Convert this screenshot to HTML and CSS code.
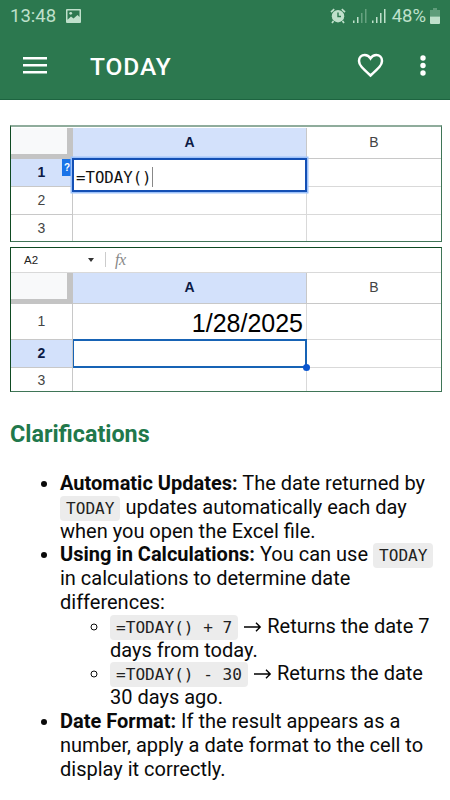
FILE: index.html
```
<!DOCTYPE html>
<html lang="en">
<head>
    <meta charset="UTF-8">
    <meta name="viewport" content="width=device-width, initial-scale=1.0">
    <title>TODAY</title>
    <link rel="stylesheet" href="styles.css">
</head>
<body>
    <header class="top">
        <div class="status-bar">
            <span class="clock">13:48</span>
            <svg class="picture-icon" width="15" height="14" viewBox="0 0 15 14">
                <rect width="15" height="14" rx="1" fill="currentColor"/>
                <path fill="#2c784f" d="M1.500 1.500h12v6.500l-2-2-4 3.500-2.500-2-3.500 3.200z"/>
                <circle cx="4.700" cy="4.300" r="1.400" fill="currentColor"/>
            </svg>
            <div class="status-right">
                <svg width="16" height="16" viewBox="0 0 16 16">
                    <circle cx="8" cy="8.200" r="6.200" fill="currentColor"/>
                    <path d="M1 4.200L4.200 1.200M15 4.200L11.800 1.200M3.500 13l-1.500 2M12.500 13l1.500 2" fill="none" stroke="currentColor" stroke-width="1.700"/>
                    <path d="M8 4.500v4h3" fill="none" stroke="#2c784f" stroke-width="1.400"/>
                </svg>
                <svg class="signal-first" width="14" height="15" viewBox="0 0 14 15" fill="currentColor">
                    <path d="M0 12.500h1.500V15H0zM4 9h1.500v6H4z"/>
                    <path d="M8 5h1.500v10H8zM12 1h1.500v14H12z" opacity=".4"/>
                </svg>
                <svg class="signal-second" width="14" height="15" viewBox="0 0 14 15" fill="currentColor">
                    <path d="M0 12.500h1.500V15H0zM4 9h1.500v6H4zM8 5h1.500v10H8zM12 1h1.500v14H12z"/>
                </svg>
                <span class="battery-text">48%</span>
                <svg width="10" height="16" viewBox="0 0 10 16" fill="currentColor">
                    <path d="M3 0h4v2h3v6.500H0V2h3z" opacity=".35"/>
                    <path d="M0 8.500h10V15a1 1 0 0 1-1 1H1a1 1 0 0 1-1-1z"/>
                </svg>
            </div>
        </div>
        <div class="app-bar">
            <svg width="24" height="17" viewBox="0 0 24 17" fill="#fff">
                <path d="M0 0h24v2.600H0zM0 7h24v2.600H0zM0 14h24v2.600H0z"/>
            </svg>
            <h1>TODAY</h1>
            <svg class="heart" width="27" height="25" viewBox="0 0 27 25">
                <path d="M13.500 22.500C5.500 15.300 2 12.200 2 7.900 2 4.500 4.500 2 7.700 2c2.300 0 4.500 1.300 5.800 3.400C14.800 3.300 17 2 19.300 2 22.500 2 25 4.500 25 7.900c0 4.300-3.500 7.400-11.500 14.600z" fill="none" stroke="#fff" stroke-width="2.500"/>
            </svg>
            <svg width="6" height="21" viewBox="0 0 6 21" fill="#fff">
                <circle cx="3" cy="3" r="2.700"/>
                <circle cx="3" cy="10.500" r="2.700"/>
                <circle cx="3" cy="18" r="2.700"/>
            </svg>
        </div>
    </header>

    <main>
        <div class="sheet sheet-formula">
            <div class="corner"></div>
            <div class="col selected">A</div>
            <div class="col">B</div>
            <div class="row-head selected">1<span class="help">?</span></div>
            <div class="cell">
                <div class="editor">=TODAY()<span class="caret"></span></div>
            </div>
            <div class="cell"></div>
            <div class="row-head">2</div>
            <div class="cell"></div>
            <div class="cell"></div>
            <div class="row-head">3</div>
            <div class="cell"></div>
            <div class="cell"></div>
        </div>

        <div class="sheet sheet-result">
            <div class="formula-bar">
                <span class="name-box">A2</span>
                <span class="arrow"></span>
                <span class="divider"></span>
                <span class="fx">fx</span>
            </div>
            <div class="corner"></div>
            <div class="col selected">A</div>
            <div class="col">B</div>
            <div class="row-head">1</div>
            <div class="cell date">1/28/2025</div>
            <div class="cell"></div>
            <div class="row-head selected">2</div>
            <div class="cell active"><span class="handle"></span></div>
            <div class="cell"></div>
            <div class="row-head">3</div>
            <div class="cell"></div>
            <div class="cell"></div>
        </div>

        <h2>Clarifications</h2>
        <ul>
            <li><strong>Automatic Updates:</strong> The date returned by <code>TODAY</code> updates automatically each day when you open the Excel file.</li>
            <li><strong>Using in Calculations:</strong> You can use <code>TODAY</code> in calculations to determine date differences:
                <ul>
                    <li><code>=TODAY() + 7</code> <svg class="to" width="19" height="12" viewBox="0 0 19 12"><path d="M1 6h16.500M13 1.800L17.200 6 13 10.200" fill="none" stroke="#000" stroke-width="1.400"/></svg> Returns the date 7 days from today.</li>
                    <li><code>=TODAY() - 30</code> <svg class="to" width="19" height="12" viewBox="0 0 19 12"><path d="M1 6h16.500M13 1.800L17.200 6 13 10.200" fill="none" stroke="#000" stroke-width="1.400"/></svg> Returns the date 30 days ago.</li>
                </ul>
            </li>
            <li><strong>Date Format:</strong> If the result appears as a number, apply a date format to the cell to display it correctly.</li>
        </ul>
    </main>
</body>
</html>
```
FILE: styles.css
```
:root {
    --green: #2c784f;
    --status-color: #bfe0cb;
    --header-blue: #d3e1fb;
    --line: #d9d9d9;
}

* {
    box-sizing: border-box;
}

body {
    margin: 0;
    height: 800px;
    overflow: hidden;
    background: #fff;
    color: #0a0a0a;
    font-family: Roboto, sans-serif;
}

svg {
    flex: none;
}

.top {
    height: 100px;
    background: var(--green);
    border-bottom: 1px solid #1d6440;
}

.status-bar {
    display: flex;
    align-items: center;
    height: 31px;
    padding: 0 10px;
    color: var(--status-color);
    font-size: 18.5px;
}

.picture-icon {
    margin-left: 10px;
}

.status-right {
    display: flex;
    align-items: center;
    margin-left: auto;
}

.signal-first {
    margin-left: 7px;
}

.signal-second {
    margin-left: 5px;
}

.battery-text {
    margin: 0 4px 0 6px;
}

.app-bar {
    display: flex;
    align-items: center;
    height: 68px;
    padding: 0 24px 0 23px;
}

.app-bar h1 {
    margin: 2px auto 0 43px;
    color: #fff;
    font-size: 24.5px;
    font-weight: 500;
    letter-spacing: 0.9px;
}

.heart {
    margin-right: 36px;
}

main {
    padding: 25px 8px 0 10px;
}

.sheet {
    display: grid;
    grid-template-columns: 62px 234px 1fr;
    border: 1px solid #3f7557;
    border-left-color: #0f4a22;
    font-family: "Liberation Sans", sans-serif;
    font-size: 14px;
    color: #444;
}

.sheet-formula {
    grid-template-rows: 31px 28px 28px 1fr;
    height: 117px;
    padding-top: 1px;
    border-top: 2px solid #8fac9c;
}

.sheet-result {
    grid-template-rows: 25px 31px 36px 28px 1fr;
    height: 145px;
    margin-top: 5px;
    border-top-color: #0f4a22;
}

.corner {
    background: #f8f9fa;
    border-right: 6px solid #c4c4c4;
    border-bottom: 5px solid #c4c4c4;
}

.col,
.row-head {
    display: flex;
    align-items: center;
    justify-content: center;
    padding-bottom: 2px;
    border-right: 1px solid #c8c8c8;
    border-bottom: 1px solid #c8c8c8;
}

.col + .col {
    border-right: 0;
}

.selected {
    background: var(--header-blue);
    color: #0b1a45;
    font-weight: bold;
}

.row-head {
    position: relative;
}

.row-head:nth-last-child(3) {
    padding: 0;
    border-bottom: 0;
}

.cell {
    position: relative;
    border-right: 1px solid var(--line);
    border-bottom: 1px solid var(--line);
}

.cell + .cell {
    border-right: 0;
}

.row-head:nth-last-child(3) ~ .cell {
    border-bottom: 0;
}

/* help badge sits against the open formula editor */
.help {
    position: absolute;
    top: 0;
    right: 0;
    width: 10px;
    height: 17px;
    background: #1a73e8;
    color: #fff;
    font-size: 10px;
    line-height: 17px;
    text-align: center;
}

.editor {
    position: absolute;
    z-index: 1;
    top: -1px;
    left: -1px;
    display: flex;
    align-items: center;
    width: 235px;
    height: 34px;
    padding: 4px 0 0 2px;
    border: 2px solid #1450b5;
    box-shadow: 0 0 0 1.500px #9dc2fa;
    background: #fff;
    color: #111;
    font-family: "DejaVu Sans Mono", monospace;
    font-size: 15.7px;
}

.caret {
    width: 1px;
    height: 20px;
    background: #888;
}

.formula-bar {
    grid-column: 1 / -1;
    display: flex;
    align-items: center;
    padding: 0 0 1px 13px;
    border-bottom: 1px solid var(--line);
}

.name-box {
    width: 64px;
    color: #222;
    font-size: 11.5px;
}

.arrow {
    border: 3.5px solid transparent;
    border-top: 4px solid #333;
    border-bottom: 0;
}

.divider {
    width: 1px;
    height: 15px;
    margin: 0 9px 0 11px;
    background: #ccc;
}

.fx {
    color: #888;
    font-family: "Liberation Serif", serif;
    font-size: 16px;
    font-style: italic;
    letter-spacing: -0.5px;
}

.date {
    padding: 4px 3px 0 0;
    color: #000;
    font-size: 25px;
    line-height: 30px;
    text-align: right;
}

.active::after {
    content: "";
    position: absolute;
    inset: -1px -1px -1px 0;
    border: 2px solid #1763b5;
    border-left-width: 1px;
}

.handle {
    position: absolute;
    z-index: 1;
    right: -4px;
    bottom: -4px;
    width: 7px;
    height: 7px;
    border-radius: 50%;
    background: #0b57d0;
}

h2 {
    margin: 29px 0 24px;
    color: #21784b;
    font-size: 23.3px;
    font-weight: 700;
    line-height: 27px;
}

ul {
    margin: 0;
    padding-left: 50px;
    font-size: 20px;
    line-height: 23.8px;
}

strong {
    font-weight: 700;
}

code {
    padding: 3px 6px;
    border-radius: 4px;
    background: #ececec;
    color: #222;
    font-family: "DejaVu Sans Mono", monospace;
    font-size: 16.1px;
    line-height: 1;
}
```
